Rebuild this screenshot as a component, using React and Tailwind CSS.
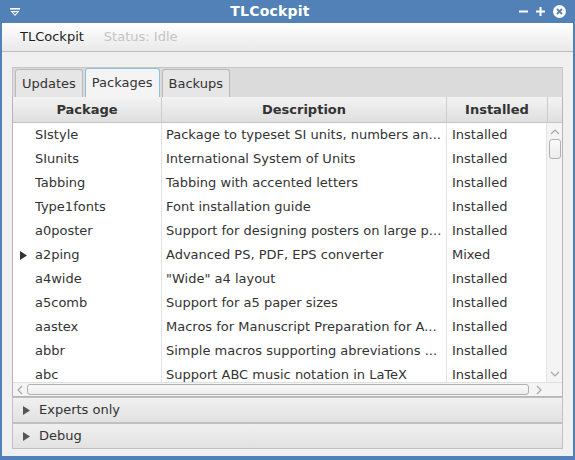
import { useState } from 'react'

const ROWS = [
  ['SIstyle', 'Package to typeset SI units, numbers an...', 'Installed'],
  ['SIunits', 'International System of Units', 'Installed'],
  ['Tabbing', 'Tabbing with accented letters', 'Installed'],
  ['Type1fonts', 'Font installation guide', 'Installed'],
  ['a0poster', 'Support for designing posters on large p...', 'Installed'],
  ['a2ping', 'Advanced PS, PDF, EPS converter', 'Mixed', true],
  ['a4wide', '"Wide" a4 layout', 'Installed'],
  ['a5comb', 'Support for a5 paper sizes', 'Installed'],
  ['aastex', 'Macros for Manuscript Preparation for A...', 'Installed'],
  ['abbr', 'Simple macros supporting abreviations ...', 'Installed'],
  ['abc', 'Support ABC music notation in LaTeX', 'Installed'],
]

function Caret({ className }) {
  return (
    <svg width="7" height="9" viewBox="0 0 7 9" className={className}>
      <path d="M0 0 L7 4.5 L0 9 Z" fill="currentColor" />
    </svg>
  )
}

function Chevron({ dir }) {
  const d = {
    up: 'M1 6 L5 2 L9 6',
    down: 'M1 2 L5 6 L9 2',
    left: 'M6 1 L2 5 L6 9',
    right: 'M2 1 L6 5 L2 9',
  }[dir]
  const vertical = dir === 'up' || dir === 'down'
  return (
    <svg width={vertical ? 10 : 8} height={vertical ? 8 : 10} viewBox={vertical ? '0 0 10 8' : '0 0 8 10'}>
      <path d={d} fill="none" stroke="#a8a8a8" strokeWidth="1.2" />
    </svg>
  )
}

function TitleBar() {
  return (
    <div className="h-[23px] flex items-center px-[6px] text-white">
      <svg width="12" height="12" viewBox="0 0 12 12" className="ml-[1px]">
        <rect x="1" y="2" width="10" height="1.6" fill="white" />
        <path d="M1.5 5 L10.5 5 L6 10 Z" fill="white" />
        <path d="M3.8 6.2 L8.2 6.2 L6 8.6 Z" fill="#5682b8" />
      </svg>
      <div className="flex-1 text-center font-bold text-[14px] tracking-[0.2px]">TLCockpit</div>
      <div className="flex items-center gap-[8px] mr-[1px]">
        <svg width="9" height="9" viewBox="0 0 9 9"><rect x="0" y="3.5" width="9" height="2" fill="white" /></svg>
        <svg width="9" height="9" viewBox="0 0 9 9">
          <rect x="0" y="3.5" width="9" height="2" fill="white" />
          <rect x="3.5" y="0" width="2" height="9" fill="white" />
        </svg>
        <svg width="13" height="13" viewBox="0 0 13 13">
          <circle cx="6.5" cy="6.5" r="6.5" fill="white" />
          <path d="M4 4 L9 9 M9 4 L4 9" stroke="#5682b8" strokeWidth="1.8" />
        </svg>
      </div>
    </div>
  )
}

function Tab({ label, active }) {
  return (
    <div
      className={
        active
          ? 'h-[29px] px-[6px] flex items-center border border-b-0 border-[#8fc0dc] bg-[#f4f4f4] rounded-t-[3px]'
          : 'h-[28px] px-[6px] flex items-center border border-b-0 border-[#b9b9b9] bg-[#e6e6e6] rounded-t-[3px]'
      }
    >
      {label}
    </div>
  )
}

function PackageTable() {
  return (
    <div className="flex flex-col flex-1 min-h-0 bg-white border border-[#b5b5b5] border-t-0 overflow-hidden">
      <div className="flex h-[26px] shrink-0 bg-gradient-to-b from-[#f3f3f3] to-[#dfdfdf] border-b border-[#c4c4c4] font-bold">
        <div className="w-[149px] flex items-center justify-center border-r border-[#cdcdcd]">Package</div>
        <div className="w-[285px] flex items-center justify-center border-r border-[#cdcdcd]">Description</div>
        <div className="w-[101px] flex items-center justify-center border-r border-[#cdcdcd]">Installed</div>
        <div className="flex-1" />
      </div>
      <div className="flex flex-1 min-h-0">
        <div className="flex-1 min-w-0 overflow-hidden">
          {ROWS.map(([name, desc, inst, expand]) => (
            <div key={name} className="flex h-[24px] items-center">
              <div className="w-[149px] h-full flex items-center border-r border-[#e2e2e2] pl-[7px]">
                <span className="w-[15px] flex items-center">
                  {expand && <Caret className="text-[#333]" />}
                </span>
                {name}
              </div>
              <div className="w-[285px] h-full flex items-center border-r border-[#e2e2e2] pl-[4px] whitespace-nowrap overflow-hidden">
                {desc}
              </div>
              <div className="flex-1 h-full flex items-center pl-[5px]">{inst}</div>
            </div>
          ))}
        </div>
        <div className="w-[16px] flex flex-col items-center bg-[#f4f4f4] border-l border-[#e4e4e4]">
          <div className="h-[14px] flex items-center justify-center pt-[4px]"><Chevron dir="up" /></div>
          <div className="w-[12px] h-[20px] mt-[2px] rounded-[3px] border border-[#b0b0b0] bg-gradient-to-b from-[#fafafa] to-[#ececec]" />
          <div className="flex-1" />
          <div className="h-[14px] flex items-center justify-center pb-[2px]"><Chevron dir="down" /></div>
        </div>
      </div>
      <div className="h-[14px] shrink-0 flex items-center bg-[#f4f4f4] border-t border-[#e0e0e0]">
        <div className="w-[14px] flex justify-center"><Chevron dir="left" /></div>
        <div className="flex-1 h-[11px] rounded-[3px] border border-[#b0b0b0] bg-gradient-to-b from-[#fafafa] to-[#ececec] mr-[3px]" />
        <div className="w-[14px] flex justify-center"><Chevron dir="right" /></div>
        <div className="w-[16px]" />
      </div>
    </div>
  )
}

function TitledPane({ label }) {
  return (
    <div className="h-[26px] shrink-0 flex items-center border border-[#c0c0c0] bg-gradient-to-b from-[#f0f0f0] to-[#e2e2e2] pl-[10px] gap-[9px]">
      <Caret className="text-[#555]" />
      <span>{label}</span>
    </div>
  )
}

export default function App() {
  const [tab] = useState('Packages')
  return (
    <div
      className="w-[575px] h-[460px] bg-[#5181b7] flex flex-col px-[2px] pb-[4px] text-[13px] text-[#333]"
      style={{ fontFamily: '"DejaVu Sans", "Noto Sans", sans-serif' }}
    >
      <TitleBar />
      <div className="flex-1 flex flex-col bg-[#f0f0f0] min-h-0">
        <div className="h-[29px] shrink-0 flex items-center gap-[20px] pl-[18px] bg-gradient-to-b from-[#ffffff] to-[#e9e9e9] border-b border-[#bdbdbd]">
          <span className="text-[#222]">TLCockpit</span>
          <span className="text-[#c4c4c4]">Status: Idle</span>
        </div>
        <div className="flex-1 flex flex-col px-[10px] pt-[15px] pb-[7px] min-h-0">
          <div className="flex items-end h-[30px] shrink-0 bg-[#dbdbdb] border border-[#c6c6c6] border-b-0 pl-[2px] gap-[2px]">
            {['Updates', 'Packages', 'Backups'].map((t) => (
              <Tab key={t} label={t} active={t === tab} />
            ))}
          </div>
          <PackageTable />
          <TitledPane label="Experts only" />
          <TitledPane label="Debug" />
        </div>
      </div>
    </div>
  )
}
